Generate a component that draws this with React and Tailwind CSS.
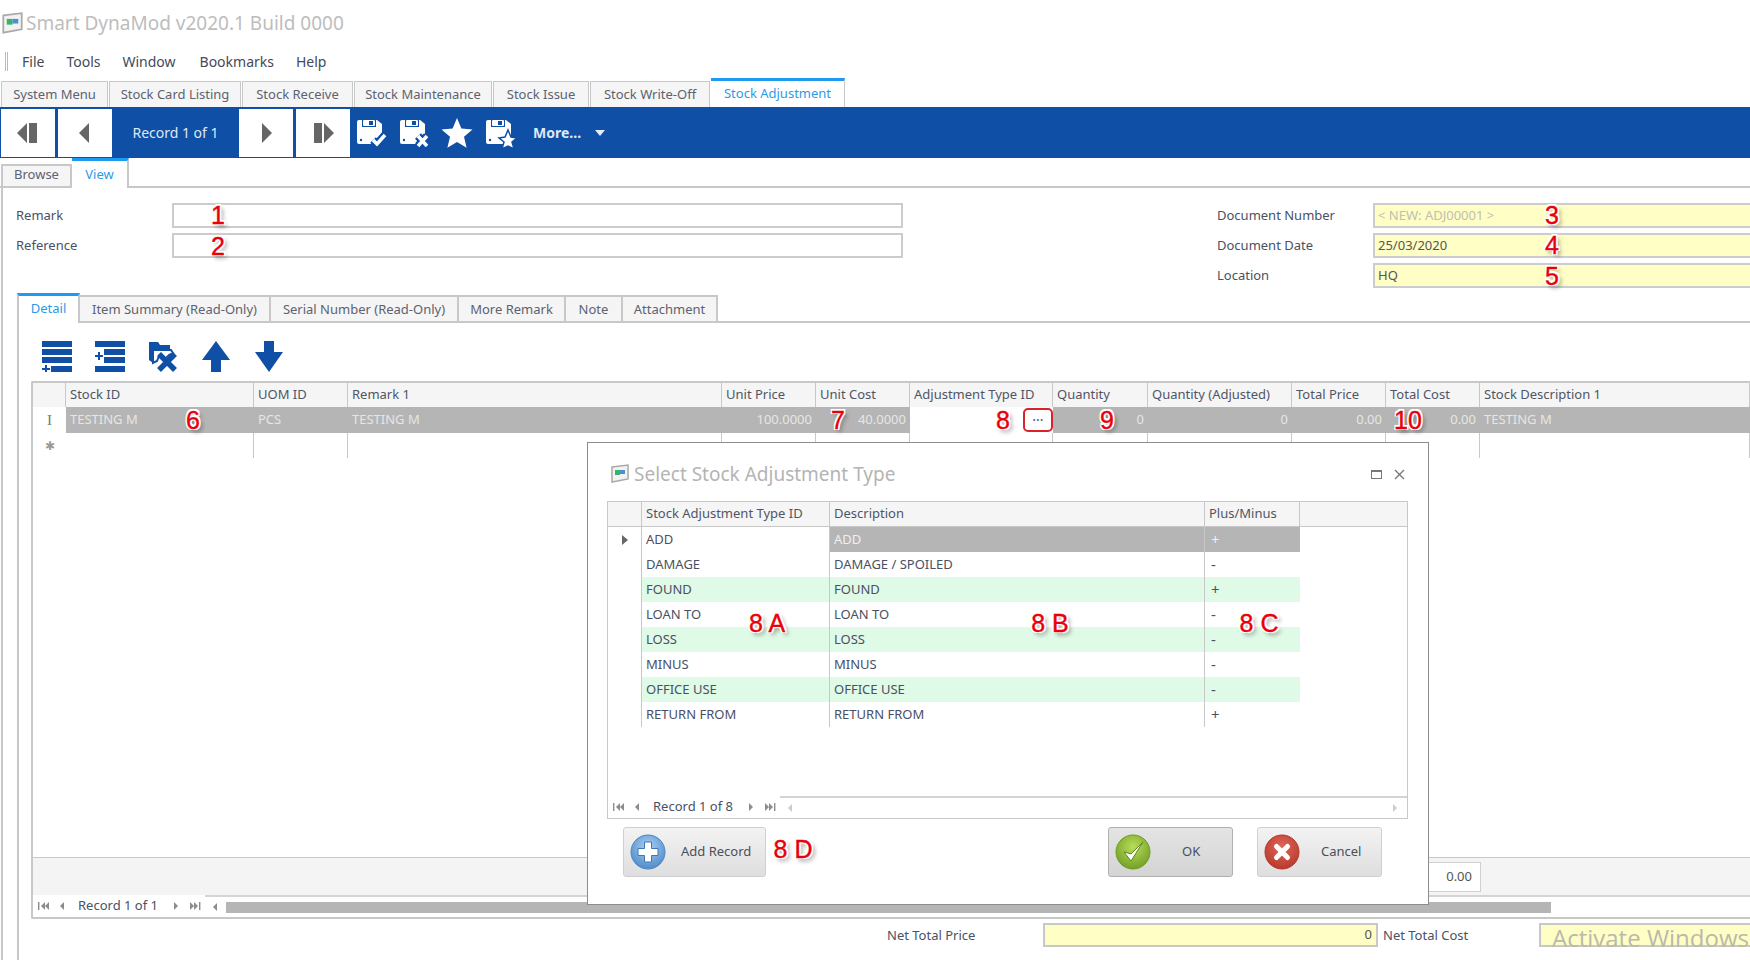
import React from "react";

const BLUE = "#0f4fa5";

const MAIN_TABS = [
  { label: "System Menu", w: "w-[107px]" },
  { label: "Stock Card Listing", w: "w-[132px]" },
  { label: "Stock Receive", w: "w-[111px]" },
  { label: "Stock Maintenance", w: "w-[138px]" },
  { label: "Stock Issue", w: "w-[96px]" },
  { label: "Stock Write-Off", w: "w-[120px]" },
];

const DETAIL_TABS = [
  { label: "Item Summary (Read-Only)", w: "w-[191px]" },
  { label: "Serial Number (Read-Only)", w: "w-[188px]" },
  { label: "More Remark", w: "w-[107px]" },
  { label: "Note", w: "w-[57px]" },
  { label: "Attachment", w: "w-[95px]" },
];

const COLUMNS = [
  { w: "w-[33px]", head: "" },
  { w: "w-[188px]", head: "Stock ID", val: "TESTING M" },
  { w: "w-[94px]", head: "UOM ID", val: "PCS" },
  { w: "w-[374px]", head: "Remark 1", val: "TESTING M" },
  { w: "w-[94px]", head: "Unit Price", val: "100.0000", right: true },
  { w: "w-[94px]", head: "Unit Cost", val: "40.0000", right: true },
  { w: "w-[143px]", head: "Adjustment Type ID", edit: true },
  { w: "w-[95px]", head: "Quantity", val: "0", right: true },
  { w: "w-[144px]", head: "Quantity (Adjusted)", val: "0", right: true },
  { w: "w-[94px]", head: "Total Price", val: "0.00", right: true },
  { w: "w-[94px]", head: "Total Cost", val: "0.00", right: true },
  { w: "w-[270px]", head: "Stock Description 1", val: "TESTING M" },
];

const TYPES = [
  ["ADD", "ADD", "+"],
  ["DAMAGE", "DAMAGE / SPOILED", "-"],
  ["FOUND", "FOUND", "+"],
  ["LOAN TO", "LOAN TO", "-"],
  ["LOSS", "LOSS", "-"],
  ["MINUS", "MINUS", "-"],
  ["OFFICE USE", "OFFICE USE", "-"],
  ["RETURN FROM", "RETURN FROM", "+"],
];

const MARKS = [
  { t: "1", pos: "left-[218px] top-[215px]" },
  { t: "2", pos: "left-[218px] top-[246px]" },
  { t: "3", pos: "left-[1552px] top-[215px]" },
  { t: "4", pos: "left-[1552px] top-[245px]" },
  { t: "5", pos: "left-[1552px] top-[276px]" },
  { t: "6", pos: "left-[193px] top-[420px]" },
  { t: "7", pos: "left-[838px] top-[420px]" },
  { t: "8", pos: "left-[1003px] top-[420px]" },
  { t: "9", pos: "left-[1107px] top-[420px]" },
  { t: "10", pos: "left-[1408px] top-[420px]" },
  { t: "8 A", pos: "left-[767px] top-[623px]" },
  { t: "8 B", pos: "left-[1050px] top-[623px]" },
  { t: "8 C", pos: "left-[1259px] top-[623px]" },
  { t: "8 D", pos: "left-[793px] top-[849px]" },
];

function AppIcon({ className }) {
  return (
    <svg viewBox="0 0 20 20" className={className}>
      <path d="M2 3 L18 1 V15 L2 18 Z" fill="#f2f2f2" stroke="#a9a9a9" strokeWidth="1.5" />
      <rect x="5" y="6" width="5" height="5" fill="#35b56a" />
      <rect x="10" y="6" width="5" height="4" fill="#4a90d0" />
    </svg>
  );
}

function Floppy({ children }) {
  return (
    <svg viewBox="0 0 32 32" className="w-[32px] h-[32px]">
      <path d="M4 3h18l5 4v18a2 2 0 0 1-2 2H4a2 2 0 0 1-2-2V5a2 2 0 0 1 2-2z" fill="#fff" />
      <rect x="7" y="3" width="14" height="7" fill={BLUE} />
      <rect x="8" y="3" width="12" height="6" rx="1" fill="#fff" />
      <rect x="14" y="4" width="4" height="4" fill={BLUE} />
      <circle cx="6" cy="23" r="1.2" fill={BLUE} />
      {children}
    </svg>
  );
}

function TwoTone({ d }) {
  return (
    <>
      <path d={d} fill="none" stroke={BLUE} strokeWidth="8" />
      <path d={d} fill="none" stroke="#fff" strokeWidth="3.5" />
    </>
  );
}

function Star({ className }) {
  return (
    <svg viewBox="0 0 32 32" className={className}>
      <path d="M16 1 L20.4 11.4 L31.5 12.4 L23 19.8 L25.6 30.8 L16 25 L6.4 30.8 L9 19.8 L0.5 12.4 L11.6 11.4 Z" fill="#fff" />
    </svg>
  );
}

function RecordButton({ d }) {
  return (
    <button className="w-[54px] h-[48px] bg-white flex items-center justify-center">
      <svg viewBox="0 0 24 24" className="w-[24px] h-[24px]">
        <path d={d} fill="#666" />
      </svg>
    </button>
  );
}

function NavGlyph({ kind, light }) {
  const paths = {
    first: "M1 1h1.4v8H1z M8 1v8L4 5z M12 1v8L8 5z",
    prev: "M8 1v8L4 5z",
    next: "M4 1v8l4-4z",
    last: "M1 1v8l4-4z M5 1v8l4-4z M10 1h1.4v8H10z",
  };
  return (
    <svg viewBox="0 0 12 10" className="w-[12px] h-[10px] shrink-0">
      <path d={paths[kind]} fill={light ? "#cccccc" : "#8c8c8c"} />
    </svg>
  );
}

function GridNav({ label, children }) {
  return (
    <div className="flex items-center h-full">
      <div className="flex items-center gap-[7px] pl-[4px]">
        <NavGlyph kind="first" />
        <NavGlyph kind="prev" />
        <span className="ml-[3px] mr-[5px] text-[13px] text-[#4a5163] whitespace-nowrap">{label}</span>
        <NavGlyph kind="next" />
        <NavGlyph kind="last" />
      </div>
      {children}
    </div>
  );
}

function BlueIcons() {
  return (
    <div className="flex items-center">
      <div className="w-[5px]" />
      <Floppy><TwoTone d="M18 23 L22 27 L30 18" /></Floppy>
      <div className="w-[11px]" />
      <Floppy><TwoTone d="M20 19 L29 29 M29 19 L20 29" /></Floppy>
      <div className="w-[11px]" />
      <Star className="w-[32px] h-[32px]" />
      <div className="w-[11px]" />
      <Floppy>
        <path d="M24 13 L27 20 L33 21 L28 25 L30 32 L24 29 L18 32 L20 25 L15 21 L21 20 Z" fill="#fff" stroke={BLUE} strokeWidth="1.5" />
      </Floppy>
    </div>
  );
}

function DetailToolbar() {
  return (
    <div className="flex items-start gap-[23px] pl-[23px] pt-[18px] h-[58px]">
      <svg viewBox="0 0 30 31" className="w-[30px] h-[31px]" fill={BLUE}>
        <rect x="0" y="0" width="30" height="6" />
        <rect x="0" y="8" width="30" height="6" />
        <rect x="0" y="16" width="30" height="6" />
        <rect x="9" y="25" width="21" height="6" />
        <path d="M3 24h2v3h3v2H5v2H3v-2H0v-2h3z" />
      </svg>
      <svg viewBox="0 0 30 31" className="w-[30px] h-[31px]" fill={BLUE}>
        <rect x="0" y="0" width="30" height="6" />
        <rect x="9" y="8" width="21" height="6" />
        <rect x="9" y="16" width="21" height="6" />
        <rect x="0" y="25" width="30" height="6" />
        <path d="M3 11h2v3h3v2H5v3H3v-3H0v-2h3z" />
      </svg>
      <svg viewBox="0 0 30 31" className="w-[30px] h-[31px]">
        <path d="M1 1h9l2 3h10v4H5v14L1 19z" fill={BLUE} />
        <path d="M5 9h18l2 3-4 2-5 5-5-4-2 5-4 2z" fill="none" stroke={BLUE} strokeWidth="2" />
        <path d="M11 13 L27 29 M27 13 L11 29" stroke={BLUE} strokeWidth="5.5" fill="none" />
      </svg>
      <svg viewBox="0 0 30 31" className="w-[30px] h-[31px]" fill={BLUE}>
        <path d="M15 0 L29 19 H20 V31 H10 V19 H1 Z" />
      </svg>
      <svg viewBox="0 0 30 31" className="w-[30px] h-[31px]" fill={BLUE}>
        <path d="M10 0 H20 V11 H29 L15 31 L1 11 H10 Z" />
      </svg>
    </div>
  );
}

function DetailGrid() {
  return (
    <div className="ml-[12px] h-[538px] flex flex-col border-l-2 border-t-2 border-b-2 border-[#c8c8c8] overflow-hidden rounded-tl-[2px] rounded-bl-[2px]">
      <div className="flex h-[24px] shrink-0">
        {COLUMNS.map((c) => (
          <div key={c.head} className={`${c.w} shrink-0 bg-[#f5f5f5] border-r border-[#c8c8c8] px-[4px] flex items-center text-[13px] text-[#4f5566] whitespace-nowrap`}>
            {c.head}
          </div>
        ))}
      </div>
      <div className="flex h-[26px] shrink-0">
        {COLUMNS.map((c, i) => {
          if (i === 0) {
            return (
              <div key="ind" className={`${c.w} shrink-0 flex items-center justify-center bg-white font-['Liberation_Serif',serif] text-[15px] text-[#777]`}>
                I
              </div>
            );
          }
          if (c.edit) {
            return (
              <div key={c.head} className={`${c.w} shrink-0 bg-white flex justify-end items-stretch`}>
                <div className="w-[30px] my-[1px] border-2 border-[#d8232a] rounded-[5px] flex items-center justify-center text-[14px] leading-none text-[#555]">
                  ···
                </div>
              </div>
            );
          }
          return (
            <div key={c.head} className={`${c.w} shrink-0 bg-[#b5b5b5] px-[4px] flex items-center text-[13px] text-[#e6e6e6] whitespace-nowrap ${c.right ? "justify-end" : ""}`}>
              {c.val}
            </div>
          );
        })}
      </div>
      <div className="flex h-[25px] shrink-0">
        {COLUMNS.map((c, i) => (
          <div key={c.head} className={`${c.w} shrink-0 border-[#c8c8c8] flex items-center justify-center text-[12px] text-[#999] ${i === 0 ? "" : "border-r"}`}>
            {i === 0 ? "✱" : ""}
          </div>
        ))}
      </div>
      <div className="flex-1" />
      <div className="h-[38px] shrink-0 bg-[#f4f4f4] border-t border-[#c8c8c8] flex items-center justify-end pr-[269px]">
        <div className="w-[94px] h-[30px] bg-white border border-[#d0d0d0] flex items-center justify-end px-[8px] text-[13px] text-[#555]">
          0.00
        </div>
      </div>
      <div className="h-[22px] shrink-0">
        <GridNav label="Record 1 of 1">
          <div className="flex-1 flex items-center h-full border-t-2 border-[#d4d4d4] ml-[4px] pl-[4px]">
            <NavGlyph kind="prev" />
            <div className="ml-[5px] w-[1325px] h-[11px] bg-[#b5b5b5]" />
          </div>
        </GridNav>
      </div>
    </div>
  );
}

function CircleIcon({ id, from, to, children }) {
  return (
    <svg viewBox="0 0 36 36" className="w-[36px] h-[36px] shrink-0">
      <defs>
        <radialGradient id={id} cx="50%" cy="35%" r="70%">
          <stop offset="0%" stopColor={from} />
          <stop offset="100%" stopColor={to} />
        </radialGradient>
      </defs>
      <circle cx="18" cy="18" r="17" fill={`url(#${id})`} stroke={to} strokeWidth="1" />
      {children}
    </svg>
  );
}

function DialogButton({ label, wide, dark, icon, textClass }) {
  return (
    <button className={`${wide} h-[50px] rounded-[3px] border flex items-center pl-[6px] bg-linear-to-b ${dark ? "from-[#e4e4e4] to-[#d4d4d4] border-[#b0b0b0]" : "from-[#f3f3f3] to-[#dedede] border-[#cfcfcf]"}`}>
      {icon}
      <span className={`${textClass} text-[13px] text-[#4a4f5c] whitespace-nowrap`}>{label}</span>
    </button>
  );
}

function SelectDialog() {
  return (
    <div className="absolute left-[587px] top-[442px] w-[842px] h-[463px] bg-white border border-[#8c8c8c] flex flex-col z-10">
      <div className="h-[58px] shrink-0 flex items-center pl-[22px] pr-[23px] pt-[4px]">
        <AppIcon className="w-[20px] h-[22px] shrink-0" />
        <span className="ml-[4px] text-[19px] text-[#b4b4b4] whitespace-nowrap">Select Stock Adjustment Type</span>
        <div className="ml-auto flex items-center gap-[12px]">
          <div className="w-[11px] h-[9px] border border-[#777] border-t-2" />
          <svg viewBox="0 0 11 11" className="w-[11px] h-[11px]">
            <path d="M1 1 L10 10 M10 1 L1 10" stroke="#777" strokeWidth="1.4" />
          </svg>
        </div>
      </div>
      <div className="ml-[19px] w-[801px] h-[318px] shrink-0 border border-[#c8c8c8] flex flex-col">
        <div className="flex h-[25px] shrink-0 bg-[#f5f5f5] border-b border-[#c8c8c8] text-[13px] text-[#4f5566]">
          <div className="w-[34px] border-r border-[#c8c8c8]" />
          <div className="w-[188px] border-r border-[#c8c8c8] px-[4px] flex items-center whitespace-nowrap">Stock Adjustment Type ID</div>
          <div className="w-[375px] border-r border-[#c8c8c8] px-[4px] flex items-center">Description</div>
          <div className="w-[95px] border-r border-[#c8c8c8] px-[4px] flex items-center">Plus/Minus</div>
        </div>
        {TYPES.map((r, i) => {
          const sel = i === 0;
          const green = i % 2 === 0 && !sel ? "bg-[#dffae6]" : "";
          const cell = sel ? "bg-[#b5b5b5] text-[#efefef]" : `${green} text-[#4a4f63]`;
          return (
            <div key={r[0]} className="flex h-[25px] shrink-0 text-[13px]">
              <div className="w-[34px] border-r border-[#c8c8c8] flex items-center justify-center">
                {sel && (
                  <svg viewBox="0 0 6 10" className="w-[6px] h-[10px]">
                    <path d="M0 0 L6 5 L0 10 Z" fill="#666" />
                  </svg>
                )}
              </div>
              <div className={`w-[188px] border-r border-[#c8c8c8] px-[4px] flex items-center whitespace-nowrap ${sel ? "text-[#4a4f63]" : cell}`}>{r[0]}</div>
              <div className={`w-[375px] border-r border-[#c8c8c8] px-[4px] flex items-center whitespace-nowrap ${cell}`}>{r[1]}</div>
              <div className={`w-[95px] px-[6px] flex items-center text-[15px] ${cell}`}>{r[2]}</div>
            </div>
          );
        })}
        <div className="flex-1" />
        <div className="h-[22px] shrink-0">
          <GridNav label="Record 1 of 8">
            <div className="flex-1 flex items-center justify-between h-full border-t-2 border-[#d4d4d4] ml-[4px] pl-[4px] pr-[6px]">
              <NavGlyph kind="prev" light />
              <NavGlyph kind="next" light />
            </div>
          </GridNav>
        </div>
      </div>
      <div className="flex items-start justify-between pl-[35px] pr-[46px] mt-[8px]">
        <DialogButton
          label="Add Record"
          wide="w-[143px]"
          textClass="ml-[15px]"
          icon={
            <CircleIcon id="addGrad" from="#a9d2f2" to="#4a86c6">
              <path d="M14.5 8h7v6.500h6.500v7h-6.500v6.500h-7v-6.500h-6.500v-7h6.500z" fill="#fff" stroke="#3f77b5" strokeWidth="1" />
            </CircleIcon>
          }
        />
        <div className="flex gap-[24px]">
          <DialogButton
            label="OK"
            wide="w-[125px]"
            dark
            textClass="ml-[31px]"
            icon={
              <CircleIcon id="okGrad" from="#b7dc5c" to="#6f9c20">
                <path d="M9 18 L16 27 L28 8 L16 20 Z" fill="#fff" stroke="#5f8a1a" strokeWidth="1" />
              </CircleIcon>
            }
          />
          <DialogButton
            label="Cancel"
            wide="w-[125px]"
            textClass="ml-[21px]"
            icon={
              <CircleIcon id="cancelGrad" from="#e0685a" to="#b5362a">
                <path d="M12.500 12.500 L23.500 23.500 M23.500 12.500 L12.500 23.500" stroke="#fff" strokeWidth="5" strokeLinecap="round" />
              </CircleIcon>
            }
          />
        </div>
      </div>
    </div>
  );
}

function Field({ label, children, fieldClass }) {
  return (
    <div className="flex items-center h-[25px]">
      <span className="w-[156px] shrink-0 text-[13px] text-[#4a5163]">{label}</span>
      <div className={`h-[25px] border-2 border-[#cccccc] px-[3px] flex items-center text-[13px] ${fieldClass}`}>{children}</div>
    </div>
  );
}

export default function App() {
  return (
    <div className="relative w-[1750px] h-[960px] overflow-hidden bg-white font-['Noto_Sans',sans-serif] flex flex-col">
      {/* title */}
      <div className="h-[47px] shrink-0 flex items-center pl-[1px] pb-[1px]">
        <AppIcon className="w-[23px] h-[23px]" />
        <span className="ml-[2px] text-[19px] text-[#bdbdbd] whitespace-nowrap">Smart DynaMod v2020.1 Build 0000</span>
      </div>

      {/* menu */}
      <div className="h-[31px] shrink-0 flex items-center pb-[2px] text-[14px] text-[#444a58]">
        <div className="w-[3px] h-[19px] ml-[5px] border-x border-[#bbb]" />
        <span className="ml-[14px]">File</span>
        <span className="ml-[22px]">Tools</span>
        <span className="ml-[22px]">Window</span>
        <span className="ml-[24px]">Bookmarks</span>
        <span className="ml-[22px]">Help</span>
      </div>

      {/* document tabs */}
      <div className="h-[29px] shrink-0 flex items-end pl-[1px] gap-[1px]">
        {MAIN_TABS.map((t) => (
          <div key={t.label} className={`${t.w} h-[26px] shrink-0 bg-[#f5f5f5] border border-b-0 border-[#c8c8c8] flex items-center justify-center text-[13px] text-[#5c6270] whitespace-nowrap`}>
            {t.label}
          </div>
        ))}
        <div className="w-[134px] h-[29px] shrink-0 border-t-[3px] border-[#1e9bf0] border-r border-r-[#c8c8c8] flex items-center justify-center text-[13px] text-[#2d9ae8] whitespace-nowrap">
          Stock Adjustment
        </div>
      </div>

      {/* record bar */}
      <div className="h-[51px] shrink-0 bg-[#0f4fa5] flex items-center pl-[1px]">
        <RecordButton d="M11 2 V22 L1 12 Z M13 2 H21 V22 H13 Z" />
        <div className="w-[3px]" />
        <RecordButton d="M16 2 V22 L6 12 Z" />
        <div className="w-[127px] text-center text-[14px] text-[#dfe8f5]">Record 1 of 1</div>
        <RecordButton d="M8 2 V22 L18 12 Z" />
        <div className="w-[3px]" />
        <RecordButton d="M3 2 H11 V22 H3 Z M13 2 V22 L23 12 Z" />
        <BlueIcons />
        <span className="ml-[17px] text-[14px] font-bold text-[#dfe8f5]">More...</span>
        <svg viewBox="0 0 10 6" className="ml-[14px] w-[10px] h-[6px]">
          <path d="M0 0 H10 L5 6 Z" fill="#e4ecf7" />
        </svg>
      </div>

      {/* browse/view */}
      <div className="h-[30px] shrink-0 flex items-end pl-[1px] border-b-2 border-[#c8c8c8]">
        <div className="w-[71px] h-[24px] -mb-[2px] pb-[2px] bg-[#f5f5f5] border-2 border-[#c8c8c8] flex items-center justify-center text-[13px] text-[#5c6270]">
          Browse
        </div>
        <div className="w-[57px] h-[30px] -mb-[2px] bg-white border-t-[3px] border-t-[#1e9bf0] border-r-2 border-r-[#c8c8c8] flex items-center justify-center text-[13px] text-[#2d9ae8]">
          View
        </div>
      </div>

      {/* content */}
      <div className="flex-1 min-h-0 ml-[1px] border-l-2 border-[#c8c8c8] flex flex-col">
        <div className="h-[105px] shrink-0 flex justify-between pt-[15px] pl-[13px]">
          <div className="flex flex-col gap-[5px]">
            <Field label="Remark" fieldClass="w-[731px]" />
            <Field label="Reference" fieldClass="w-[731px]" />
          </div>
          <div className="flex flex-col gap-[5px] w-[539px] -mr-[6px]">
            <Field label="Document Number" fieldClass="flex-1 bg-[#fffec4] text-[#c0c0b0]">&lt; NEW: ADJ00001 &gt;</Field>
            <Field label="Document Date" fieldClass="flex-1 bg-[#fffec4] text-[#555]">25/03/2020</Field>
            <Field label="Location" fieldClass="flex-1 bg-[#fffec4] text-[#555]">HQ</Field>
          </div>
        </div>

        <div className="h-[30px] shrink-0 ml-[14px] flex items-end border-b-2 border-[#c8c8c8]">
          <div className="w-[63px] h-[30px] -mb-[2px] pb-[2px] bg-white border-t-[3px] border-t-[#1e9bf0] border-r-2 border-r-[#c8c8c8] border-l-2 border-l-[#c8c8c8] flex items-center justify-center text-[13px] text-[#2d9ae8]">
            Detail
          </div>
          {DETAIL_TABS.map((t) => (
            <div key={t.label} className={`${t.w} h-[26px] pt-[1px] shrink-0 bg-[#f5f5f5] border-2 border-b-0 border-l-0 border-[#c8c8c8] flex items-center justify-center text-[13px] text-[#5c6270] whitespace-nowrap`}>
              {t.label}
            </div>
          ))}
        </div>

        <div className="flex-1 min-h-0 ml-[14px] border-l-2 border-[#c8c8c8] flex flex-col">
          <DetailToolbar />
          <DetailGrid />
          <div className="flex items-center h-[24px] mt-[4px] text-[13px] text-[#4a5163]">
            <span className="ml-[868px] w-[156px] pt-[2px]">Net Total Price</span>
            <div className="w-[335px] h-[24px] bg-[#fffec4] border-2 border-[#c8c8c8] flex items-center justify-end px-[4px] text-[#555]">0</div>
            <span className="ml-[5px] w-[156px] pt-[2px] whitespace-nowrap">Net Total Cost</span>
            <div className="flex-1 h-[24px] bg-[#fffec4] border-2 border-r-0 border-[#c8c8c8]" />
          </div>
        </div>
      </div>

      <SelectDialog />

      {MARKS.map((m) => (
        <span
          key={m.t}
          className={`absolute z-20 ${m.pos} -translate-x-1/2 -translate-y-1/2 whitespace-nowrap font-['Liberation_Sans',sans-serif] text-[25px] leading-none text-[#e8000b] [-webkit-text-stroke:0.4px_#e8000b] [text-shadow:1.5px_0_#fff,-1.5px_0_#fff,0_1.5px_#fff,0_-1.5px_#fff,1.5px_1.5px_#fff,-1.5px_-1.5px_#fff,1.5px_-1.5px_#fff,-1.5px_1.5px_#fff,3px_3px_4px_rgba(0,0,0,0.45)]`}
        >
          {m.t}
        </span>
      ))}

      <span className="absolute z-20 left-[1552px] top-[921px] whitespace-nowrap font-['Open_Sans',sans-serif] text-[24px] leading-[34px] text-[#b9b9ac]">
        Activate Windows
      </span>
    </div>
  );
}
